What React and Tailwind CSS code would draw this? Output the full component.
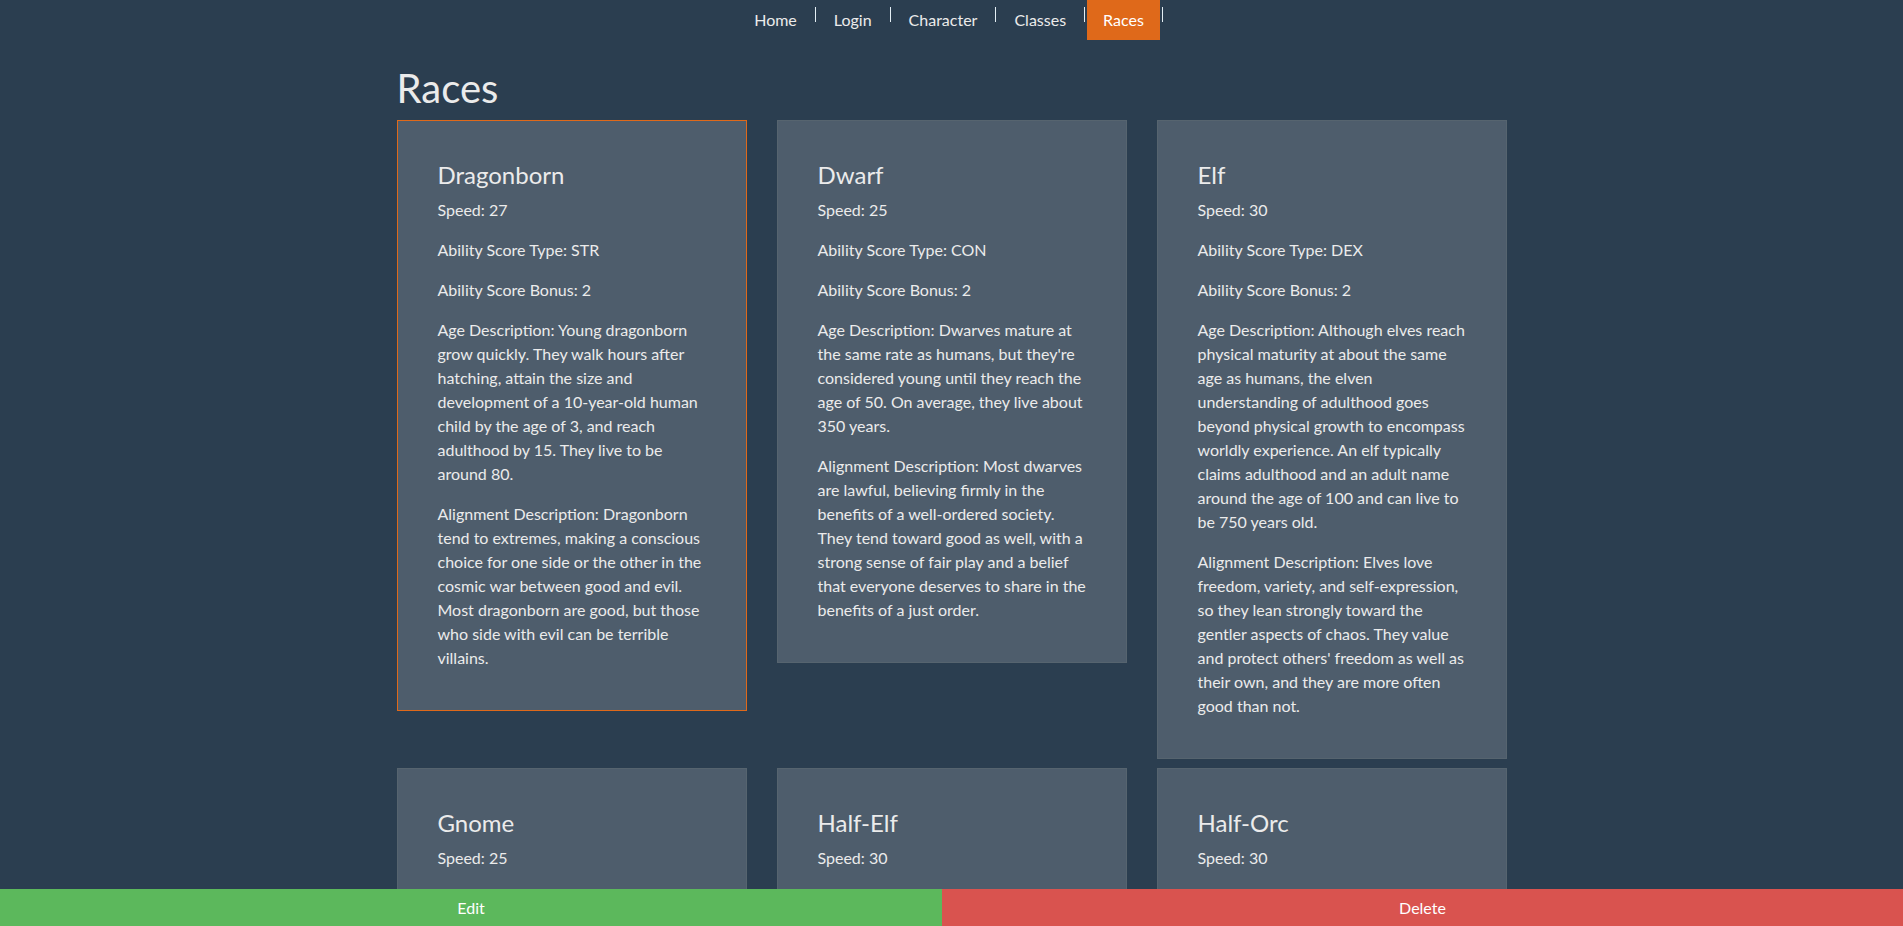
import React from 'react';

const navItems = ['Home', 'Login', 'Character', 'Classes', 'Races'];

const races = [
  {
    name: 'Dragonborn',
    speed: 27,
    type: 'STR',
    bonus: 2,
    age: 'Young dragonborn grow quickly. They walk hours after hatching, attain the size and development of a 10-year-old human child by the age of 3, and reach adulthood by 15. They live to be around 80.',
    alignment: 'Dragonborn tend to extremes, making a conscious choice for one side or the other in the cosmic war between good and evil. Most dragonborn are good, but those who side with evil can be terrible villains.',
  },
  {
    name: 'Dwarf',
    speed: 25,
    type: 'CON',
    bonus: 2,
    age: "Dwarves mature at the same rate as humans, but they're considered young until they reach the age of 50. On average, they live about 350 years.",
    alignment: 'Most dwarves are lawful, believing firmly in the benefits of a well-ordered society. They tend toward good as well, with a strong sense of fair play and a belief that everyone deserves to share in the benefits of a just order.',
  },
  {
    name: 'Elf',
    speed: 30,
    type: 'DEX',
    bonus: 2,
    age: 'Although elves reach physical maturity at about the same age as humans, the elven understanding of adulthood goes beyond physical growth to encompass worldly experience. An elf typically claims adulthood and an adult name around the age of 100 and can live to be 750 years old.',
    alignment: "Elves love freedom, variety, and self-expression, so they lean strongly toward the gentler aspects of chaos. They value and protect others' freedom as well as their own, and they are more often good than not.",
  },
  {
    name: 'Gnome',
    speed: 25,
    type: 'INT',
    bonus: 2,
    age: 'Gnomes mature at the same rate humans do, and most are expected to settle down into an adult life by around age 40. They can live 350 to almost 500 years.',
    alignment: 'Gnomes are most often good. Those who tend toward law are sages, engineers, researchers, scholars, investigators, or inventors. Those who tend toward chaos are minstrels, tricksters, wanderers, or fanciful jewelers. Gnomes are good-hearted, and even the tricksters among them are more playful than vicious.',
  },
  {
    name: 'Half-Elf',
    speed: 30,
    type: 'CHA',
    bonus: 2,
    age: 'Half-elves mature at the same rate humans do and reach adulthood around the age of 20. They live much longer than humans, however, often exceeding 180 years.',
    alignment: "Half-elves share the chaotic bent of their elven heritage. They value both personal freedom and creative expression, demonstrating neither love of leaders nor desire for followers. They chafe at rules, resent others' demands, and sometimes prove unreliable, or at least unpredictable.",
  },
  {
    name: 'Half-Orc',
    speed: 30,
    type: 'STR',
    bonus: 2,
    age: 'Half-orcs mature a little faster than humans, reaching adulthood around age 14. They age noticeably faster and rarely live longer than 75 years.',
    alignment: 'Half-orcs inherit a tendency toward chaos from their orc parents and are not strongly inclined toward good. Half-orcs raised among orcs and willing to live out their lives among them are usually evil.',
  },
  {
    name: 'Halfling',
    speed: 25,
    type: 'DEX',
    bonus: 2,
    age: 'A halfling reaches adulthood at the age of 20 and generally lives into the middle of his or her second century.',
    alignment: 'Most halflings are lawful good. As a rule, they are good-hearted and kind, hate to see others in pain, and have no tolerance for oppression.',
  },
  {
    name: 'Human',
    speed: 30,
    type: 'STR',
    bonus: 1,
    age: 'Humans reach adulthood in their late teens and live less than a century.',
    alignment: 'Humans tend toward no particular alignment. The best and the worst are found among them.',
  },
  {
    name: 'Tiefling',
    speed: 30,
    type: 'CHA',
    bonus: 2,
    age: 'Tieflings mature at the same rate as humans but live a few years longer.',
    alignment: 'Tieflings might not have an innate tendency toward evil, but many of them end up there. Evil or not, an independent nature inclines many tieflings toward a chaotic alignment.',
  },
];

function Navbar() {
  return (
    <nav className="flex justify-center items-start h-10">
      {navItems.map((item) => (
        <div key={item} className="flex items-start">
          <a
            href="#"
            className={
              item === 'Races'
                ? 'px-4 py-2 leading-6 text-white bg-[#df691a]'
                : 'px-4 py-2 leading-6 text-[#ebebeb]'
            }
          >
            {item}
          </a>
          <span className="mt-[7px] ml-[2px] mr-[2px] w-px h-[15px] bg-[#e4eef4]" />
        </div>
      ))}
    </nav>
  );
}

function RaceCard({ race, active }) {
  return (
    <div
      className={
        active
          ? 'border border-[#df691a] bg-[#4e5d6c] pl-10 pr-[37px] pt-10 pb-6'
          : 'border border-[#56646f] bg-[#4e5d6c] pl-10 pr-[37px] pt-10 pb-6'
      }
    >
      <h3 className="text-2xl leading-[1.2] mb-2">{race.name}</h3>
      <p className="mb-4">Speed: {race.speed}</p>
      <p className="mb-4">Ability Score Type: {race.type}</p>
      <p className="mb-4">Ability Score Bonus: {race.bonus}</p>
      <p className="mb-4">Age Description: {race.age}</p>
      <p className="mb-4">Alignment Description: {race.alignment}</p>
    </div>
  );
}

export default function App() {
  return (
    <div
      className="min-h-screen bg-[#2b3e50] text-[#ebebeb] text-base leading-6 pb-[60px]"
      style={{ fontFamily: 'Lato, "Noto Sans", sans-serif' }}
    >
      <Navbar />

      <main className="w-[1110px] mx-auto">
        <h1 className="text-[40px] leading-[1.2] mt-6 mb-2">Races</h1>
        <div className="grid grid-cols-3 gap-x-[30px] gap-y-[9px] items-start">
          {races.map((race, i) => (
            <RaceCard key={race.name} race={race} active={i === 0} />
          ))}
        </div>
      </main>

      {/* Action bar stays pinned over the list */}
      <div className="fixed bottom-0 left-0 right-0 flex h-[37px] text-white">
        <button className="w-[49.5%] bg-[#5cb85c] leading-6">Edit</button>
        <button className="flex-1 bg-[#d9534f] leading-6">Delete</button>
      </div>
    </div>
  );
}
